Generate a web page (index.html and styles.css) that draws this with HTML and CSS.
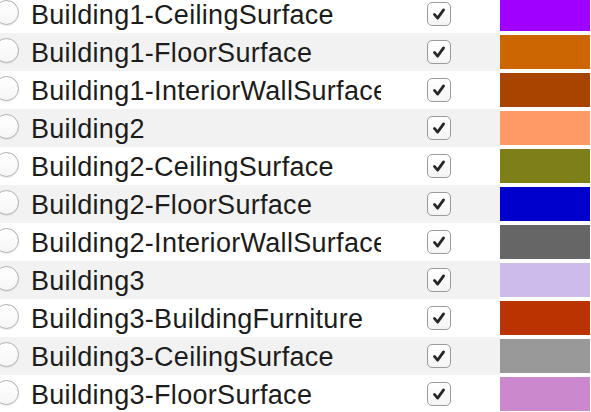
FILE: index.html
```html
<!DOCTYPE html>
<html lang="en">
  <head>
    <meta charset="UTF-8" />
    <title>Layers</title>
    <link rel="stylesheet" href="styles.css">
  </head>
  <body>
    <div class="layers">
      <div class="row">
        <span class="radio"></span>
        <span class="name">Building1-CeilingSurface</span>
        <span class="check"><svg viewBox="0 0 24 24"><path d="M7 12.5 L10.5 16.5 L17 7.5"/></svg></span>
        <span class="color"><span class="swatch" style="background:#9f00ff"></span></span>
      </div>
      <div class="row">
        <span class="radio"></span>
        <span class="name">Building1-FloorSurface</span>
        <span class="check"><svg viewBox="0 0 24 24"><path d="M7 12.5 L10.5 16.5 L17 7.5"/></svg></span>
        <span class="color"><span class="swatch" style="background:#cc6600"></span></span>
      </div>
      <div class="row">
        <span class="radio"></span>
        <span class="name">Building1-InteriorWallSurface</span>
        <span class="check"><svg viewBox="0 0 24 24"><path d="M7 12.5 L10.5 16.5 L17 7.5"/></svg></span>
        <span class="color"><span class="swatch" style="background:#a84300"></span></span>
      </div>
      <div class="row">
        <span class="radio"></span>
        <span class="name">Building2</span>
        <span class="check"><svg viewBox="0 0 24 24"><path d="M7 12.5 L10.5 16.5 L17 7.5"/></svg></span>
        <span class="color"><span class="swatch" style="background:#ff9966"></span></span>
      </div>
      <div class="row">
        <span class="radio"></span>
        <span class="name">Building2-CeilingSurface</span>
        <span class="check"><svg viewBox="0 0 24 24"><path d="M7 12.5 L10.5 16.5 L17 7.5"/></svg></span>
        <span class="color"><span class="swatch" style="background:#7f7f1a"></span></span>
      </div>
      <div class="row">
        <span class="radio"></span>
        <span class="name">Building2-FloorSurface</span>
        <span class="check"><svg viewBox="0 0 24 24"><path d="M7 12.5 L10.5 16.5 L17 7.5"/></svg></span>
        <span class="color"><span class="swatch" style="background:#0000cc"></span></span>
      </div>
      <div class="row">
        <span class="radio"></span>
        <span class="name">Building2-InteriorWallSurface</span>
        <span class="check"><svg viewBox="0 0 24 24"><path d="M7 12.5 L10.5 16.5 L17 7.5"/></svg></span>
        <span class="color"><span class="swatch" style="background:#666666"></span></span>
      </div>
      <div class="row">
        <span class="radio"></span>
        <span class="name">Building3</span>
        <span class="check"><svg viewBox="0 0 24 24"><path d="M7 12.5 L10.5 16.5 L17 7.5"/></svg></span>
        <span class="color"><span class="swatch" style="background:#cdbbec"></span></span>
      </div>
      <div class="row">
        <span class="radio"></span>
        <span class="name">Building3-BuildingFurniture</span>
        <span class="check"><svg viewBox="0 0 24 24"><path d="M7 12.5 L10.5 16.5 L17 7.5"/></svg></span>
        <span class="color"><span class="swatch" style="background:#bb3300"></span></span>
      </div>
      <div class="row">
        <span class="radio"></span>
        <span class="name">Building3-CeilingSurface</span>
        <span class="check"><svg viewBox="0 0 24 24"><path d="M7 12.5 L10.5 16.5 L17 7.5"/></svg></span>
        <span class="color"><span class="swatch" style="background:#999999"></span></span>
      </div>
      <div class="row">
        <span class="radio"></span>
        <span class="name">Building3-FloorSurface</span>
        <span class="check"><svg viewBox="0 0 24 24"><path d="M7 12.5 L10.5 16.5 L17 7.5"/></svg></span>
        <span class="color"><span class="swatch" style="background:#cc88cc"></span></span>
      </div>
    </div>
  </body>
</html>
```

FILE: styles.css
```css
body {
  margin: 0;
  background-color: #ffffff;
  font-family: "Liberation Sans", Arial, sans-serif;
  color: #1c1c1c;
  overflow: hidden;
}
.layers {
  margin-top: -5px;
  width: 590px;
}
.row {
  display: grid;
  grid-template-columns: 31px 350px 119px 90px;
  height: 38px;
  align-items: center;
}
.row:nth-child(even) {
  background-color: #f2f2f2;
}
.radio {
  display: block;
  width: 23px;
  height: 23px;
  margin-left: -6px;
  margin-top: -3px;
  border: 1px solid #b0b0b0;
  border-radius: 50%;
  background: linear-gradient(#ffffff, #f6f6f6);
  box-shadow: 0 1px 1px rgba(0, 0, 0, 0.08);
}
.name {
  font-size: 27px;
  letter-spacing: 0.3px;
  line-height: 38px;
  padding-top: 1px;
  white-space: nowrap;
  overflow: hidden;
}
.check {
  display: block;
  width: 22px;
  height: 22px;
  margin-left: 46px;
  border: 1px solid #9a9a9a;
  border-radius: 5px;
  background: linear-gradient(#ffffff, #f4f4f4);
}
.check svg {
  display: block;
  width: 22px;
  height: 22px;
  fill: none;
  stroke: #262626;
  stroke-width: 3;
  stroke-linecap: round;
  stroke-linejoin: round;
}
.color {
  display: flex;
  height: 38px;
  padding: 2px 0;
  box-sizing: border-box;
  background-color: #ffffff;
}
.swatch {
  flex: 1;
}
```
